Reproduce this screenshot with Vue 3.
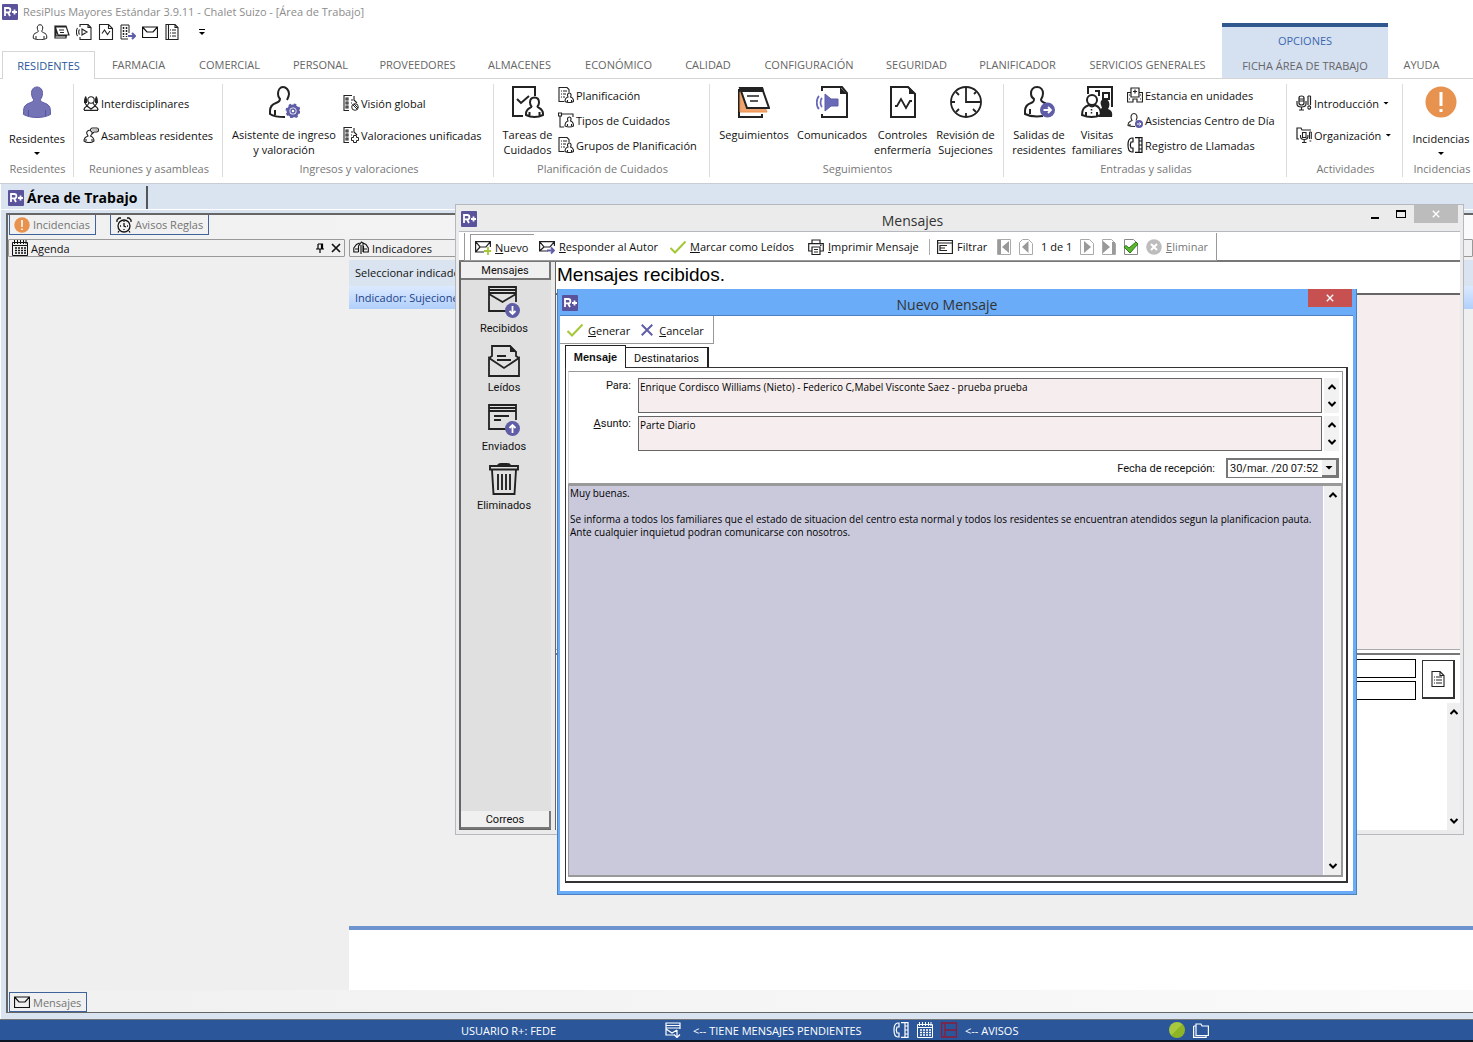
<script setup>
import { ref } from 'vue'

const tabs = ['RESIDENTES', 'FARMACIA', 'COMERCIAL', 'PERSONAL', 'PROVEEDORES', 'ALMACENES', 'ECONÓMICO', 'CALIDAD', 'CONFIGURACIÓN', 'SEGURIDAD', 'PLANIFICADOR', 'SERVICIOS GENERALES', 'FICHA ÁREA DE TRABAJO', 'AYUDA']
const activeTab = ref('RESIDENTES')
const contextTab = 'FICHA ÁREA DE TRABAJO'

const quick = [
  ['person', 'Residentes'], ['notes', 'Seguimientos'], ['speaker', 'Comunicados'], ['chart', 'Controles'],
  ['building', 'Salidas'], ['mail', 'Mensajes'], ['list', 'Informes'],
]

const groups = [
  { label: 'Residentes', cls: 'g-res', big: [{ icon: 'person-fill', lines: ['Residentes'], menu: true }] },
  { label: 'Reuniones y asambleas', cls: 'g-reu', small: [['meeting', 'Interdisciplinares'], ['talk', 'Asambleas residentes']] },
  { label: 'Ingresos y valoraciones', cls: 'g-ing', big: [{ icon: 'person-gear', lines: ['Asistente de ingreso', 'y valoración'] }], small: [['global', 'Visión global'], ['unified', 'Valoraciones unificadas']] },
  { label: 'Planificación de Cuidados', cls: 'g-pla', big: [{ icon: 'tasks', lines: ['Tareas de', 'Cuidados'] }], small: [['plan', 'Planificación'], ['types', 'Tipos de Cuidados'], ['plan', 'Grupos de Planificación']] },
  { label: 'Seguimientos', cls: 'g-seg', big: [{ icon: 'notes-big', lines: ['Seguimientos'] }, { icon: 'speaker-big', lines: ['Comunicados'] }, { icon: 'chart-big', lines: ['Controles', 'enfermería'] }, { icon: 'clock', lines: ['Revisión de', 'Sujeciones'] }] },
  { label: 'Entradas y salidas', cls: 'g-ent', big: [{ icon: 'person-out', lines: ['Salidas de', 'residentes'] }, { icon: 'visits', lines: ['Visitas', 'familiares'] }], small: [['hospital', 'Estancia en unidades'], ['assist', 'Asistencias Centro de Día'], ['phone', 'Registro de Llamadas']] },
  { label: 'Actividades', cls: 'g-act', small: [['mic', 'Introducción', true], ['micfolder', 'Organización', true]] },
  { label: 'Incidencias', cls: 'g-inc', big: [{ icon: 'alert', lines: ['Incidencias'], menu: true }] },
]

const folders = [['inbox', 'Recibidos'], ['opened', 'Leídos'], ['sent', 'Enviados'], ['trash', 'Eliminados']]

const para = ref('Enrique Cordisco Williams (Nieto) - Federico C,Mabel Visconte Saez - prueba prueba')
const asunto = ref('Parte Diario')
const cuerpo = ref('Muy buenas.\n\nSe informa a todos los familiares que el estado de situacion del centro esta normal y todos los residentes se encuentran atendidos segun la planificacion pauta.\nAnte cualquier inquietud podran comunicarse con nosotros.')
</script>

<template>
  <div class="app">
    <svg class="sprite" aria-hidden="true">
      <symbol id="logo" viewBox="0 0 16 16">
        <rect width="16" height="16" rx="1" fill="#5b529c" />
        <path d="M3 12V4h3.200a2 2 0 0 1 0 4.400H3M6 8.400 8 12M10 8h5M12.500 5.500v5" fill="none" stroke="#fff" stroke-width="1.800" />
      </symbol>
      <symbol id="person" viewBox="0 0 32 32">
        <path d="M16 1.500c-4 0-5.500 3-5.500 6.500 0 2.500 1 4.500 2 6 0 2-1.500 2.500-4 3.500-4 1.500-6 3.500-6 8.500v2.500c4 2 8 3 13.500 3s9.500-1 13.500-3V26c0-5-2-7-6-8.500-2.500-1-4-1.500-4-3.500 1-1.500 2-3.500 2-6 0-3.500-1.500-6.500-5.500-6.500zM8 24v6M24 24v6" fill="none" stroke="#222" stroke-width="2" />
      </symbol>
      <symbol id="person-fill" viewBox="0 0 32 32">
        <path d="M16 1c-4 0-5.500 3-5.500 6.500 0 2.500 1 4.500 2 6 0 2-1.500 2.500-4 3.500-4 1.500-6 3.500-6 8.500v3c4 2 8 3 13.500 3s9.500-1 13.500-3v-3c0-5-2-7-6-8.500-2.500-1-4-1.500-4-3.500 1-1.500 2-3.500 2-6C21.500 4 20 1 16 1z" fill="#7473b5" stroke="#5f5da6" />
        <path d="M7.500 24v6M24.500 24v6" stroke="#5654a0" />
      </symbol>
      <symbol id="person-gear" viewBox="0 0 32 32">
        <path d="M17 31C9 31 5 30 2 28v-3c0-5 3-7 6-8s4-2 4-4c-1-1-2-3-2-5 0-4 2-7 5-7s6 3 6 7c0 2-1 4-2 6M7 24v5" fill="none" stroke="#222" stroke-width="2" />
        <circle cx="25" cy="25" r="5" fill="#fff" stroke="#5f5da6" stroke-width="3" />
        <circle cx="25" cy="25" r="6.500" fill="none" stroke="#5f5da6" stroke-width="2" stroke-dasharray="2.500 2.600" />
        <circle cx="25" cy="25" r="2" fill="none" stroke="#5f5da6" stroke-width="1.500" />
      </symbol>
      <symbol id="person-out" viewBox="0 0 32 32">
        <path d="M20 30c-8 1-14 0-18-2v-3c0-5 3-7 6-8s3-2 3-4C9 12 8 10 8 7.500 8 4 10 1 14 1s6 3 6 6.500c0 2.500-1 4.500-2 6 0 2 2 3 5 4M7 23v5" fill="none" stroke="#222" stroke-width="2" />
        <circle cx="24.500" cy="24" r="7.500" fill="#5f5da6" />
        <path d="M20.500 24h7M25 21l3 3-3 3" fill="none" stroke="#fff" stroke-width="1.800" />
      </symbol>
      <symbol id="tasks" viewBox="0 0 32 32">
        <path d="M11 30H1V1h22v9" fill="none" stroke="#222" stroke-width="2" />
        <path d="m5 13 4 4 8-7" fill="none" stroke="#222" stroke-width="2" />
        <path d="M22.500 11.500c-3 0-4.500 2-4.500 5 0 2 .5 3 1.500 4 0 1.500-5.500 2-5.500 7v1.500c5 2.500 12 2.500 17 0v-1.500c0-5-5.500-5.500-5.500-7 1-1 1.500-2 1.500-4 0-3-1.500-5-4.500-5zM17.500 26v4M27.500 26v4" fill="#fff" stroke="#222" stroke-width="2" />
      </symbol>
      <symbol id="notes-big" viewBox="0 0 32 32">
        <path d="M1 3v28h23v-3" fill="none" stroke="#222" stroke-width="2" />
        <path d="M2 6v20h27l-2-5z" fill="#f0a36c" stroke="#e8924f" />
        <path d="M2 2h22l7 20H9z" fill="#fff" stroke="#222" stroke-width="2" />
        <path d="M1 1h24l1 5H4z" fill="#222" />
        <path d="M9 10h12M12 15h8" stroke="#222" stroke-width="1.500" />
      </symbol>
      <symbol id="speaker-big" viewBox="0 0 32 32">
        <path d="M6 5V1h20l5 6v24H6v-3" fill="none" stroke="#222" stroke-width="2" />
        <path d="M24 1v7h7z" fill="#222" />
        <path d="M9 8v17l6-5h7v-7h-7z" fill="#6b6ab8" stroke="#5f5da6" />
        <path d="M6 12c-2 2-2 7 0 9M3 10c-3 3-3 10 0 13" fill="none" stroke="#6b6ab8" stroke-width="1.800" />
      </symbol>
      <symbol id="chart-big" viewBox="0 0 32 32">
        <path d="M4 1h17l7 7v23H4z" fill="none" stroke="#222" stroke-width="2" />
        <path d="M22 1v7h7z" fill="#222" />
        <path d="M8 20h2l4-7 5 9 4-7h2" fill="none" stroke="#222" stroke-width="1.800" />
      </symbol>
      <symbol id="clock" viewBox="0 0 32 32">
        <circle cx="16" cy="16" r="15" fill="none" stroke="#222" stroke-width="1.800" />
        <path d="M16 1v15h15M16 27v4M1 16h4M6 6l3 3M6 26l3-3M26 26l-3-3M26 6l-2 2" fill="none" stroke="#222" stroke-width="1.800" />
      </symbol>
      <symbol id="visits" viewBox="0 0 32 32">
        <path d="M7 8V1h24v20M14 5h4v5M22 7h6v6h-6z" fill="none" stroke="#222" stroke-width="2" />
        <path d="M24 13c-4 0-5 3-4 6l1 3-3 2v7h13c1-5-1-7-4-8 3-4 1-10-3-10z" fill="#222" />
        <circle cx="11" cy="14" r="5" fill="#fff" stroke="#222" stroke-width="2" />
        <path d="M8 19c-5 2-7 4-7 10 6 2.500 13 2.500 19 0 0-6-2-8-6-10-2 2-4 2-6 0zM5 26v4M16 26v4" fill="#fff" stroke="#222" stroke-width="2" />
        <path d="M10.500 23v5" stroke="#222" stroke-width="1.500" stroke-dasharray="1.500" />
      </symbol>
      <symbol id="alert" viewBox="0 0 32 32">
        <circle cx="16" cy="16" r="15.500" fill="#e8924f" />
        <path d="M16 6v14M16 23v3" stroke="#fff" stroke-width="3" />
      </symbol>
      <symbol id="notes" viewBox="0 0 16 16">
        <path d="M1 2h11l3 9H4zM1 2v12h11v-2M2 5v7h11M1 3h11M5 6h5M6 8.500h4" fill="none" stroke="#222" stroke-width="1.200" />
      </symbol>
      <symbol id="speaker" viewBox="0 0 16 16">
        <path d="M4 3V.5h8l3 3v12H4V13M12 .5v3h3M6 5v6l5-3zM3.500 5.500c-1 1-1 4 0 5M1.500 4c-1.500 2-1.500 6 0 8" fill="none" stroke="#222" stroke-width="1.100" />
      </symbol>
      <symbol id="chart" viewBox="0 0 16 16">
        <path d="M1.500.5h9l4 4v11h-13zM10.500.5v4h4M4 9.500 6.500 6l3 4.500L12 7" fill="none" stroke="#222" stroke-width="1.100" />
      </symbol>
      <symbol id="building" viewBox="0 0 16 16">
        <path d="M8 15H1V1h8v8" fill="none" stroke="#222" />
        <path d="M3.500 3v10M6.500 3v10" stroke="#222" stroke-width="1.500" stroke-dasharray="2 1" />
        <path d="M8 12h6M12 9l3 3-3 3" fill="none" stroke="#5f5da6" stroke-width="2" />
      </symbol>
      <symbol id="mail" viewBox="0 0 16 16">
        <path d="M.5 3h15v10.500H.5zM.5 3 5 8h6l4.500-5" fill="none" stroke="currentColor" stroke-width="1.200" />
      </symbol>
      <symbol id="list" viewBox="0 0 16 16">
        <path d="M2 .5h9l3 3v12H2zM4.500.5v15M11 .5v3h3M6 6h1M8 6h4M6 9h1M8 9h4M6 12h1M8 12h4" fill="none" stroke="#222" stroke-width="1.100" />
      </symbol>
      <symbol id="doc" viewBox="0 0 16 16">
        <path d="M2 .5h8l4 4v11H2zM10 .5v4h4M4 6h1M6 6h6M4 9h1M6 9h6M4 12h1M6 12h6" fill="none" stroke="#222" stroke-width="1.100" />
      </symbol>
      <symbol id="meeting" viewBox="0 0 16 16">
        <path d="M3 1C1 2 1 6 1 8h3V4zM13 1c2 1 2 5 2 7h-3V4z" fill="#222" />
        <circle cx="8" cy="5" r="3.200" fill="#fff" stroke="#222" stroke-width="1.100" />
        <path d="M1 15c0-2 1-3 3-4L2 8M15 15c0-2-1-3-3-4l2-3M6 8l-2 3 4 3 4-3-2-3M1 15.300h14" fill="none" stroke="#222" stroke-width="1.200" />
      </symbol>
      <symbol id="talk" viewBox="0 0 16 16">
        <path d="M8 3.500C5 2.500 3 5 4 7l1 2c-3 1-4 2-4 5 3 2 7 2 10 0 0-3-1-4-3.500-5L9 7M3 12v2M9 12v2M9 1h5q1.500 0 1.500 2T14 5h-3L9 7V5q-1.500-.5-1.500-2T9 1zM9.500 3h1M11.500 3h1M13.300 3h1" fill="none" stroke="#222" stroke-width="1.100" />
      </symbol>
      <symbol id="global" viewBox="0 0 16 16">
        <path d="M6 15.500H1V.5h8M11 1v4l3 3M3 3h2v2H3zM3 7h2v2H3zM3 11h2v2H3z" fill="none" stroke="#222" stroke-width="1.100" />
        <path d="M8 5h2M8 8h1" stroke="#222" />
        <circle cx="12" cy="12" r="3.300" fill="none" stroke="#222" /><path d="m10 10 4 4M11 9l4 4" stroke="#222" />
      </symbol>
      <symbol id="unified" viewBox="0 0 16 16">
        <path d="M6 15.500H1V.5h8M11 1v4l3 3M3 3h2v2H3zM3 7h2v2H3zM3 11h2v2H3z" fill="none" stroke="#222" stroke-width="1.100" />
        <path d="M8 5h2M8 8h1" stroke="#222" />
        <path d="M10.500 8.500h3v2h2v3h-2v2h-3v-2h-2v-3h2z" fill="#fff" stroke="#222" />
      </symbol>
      <symbol id="plan" viewBox="0 0 16 16">
        <path d="M6 14.500H1V.5h8l2 2v3M3 4h1M5 4h4M3 7h1M5 7h3M3 10h1M5 10h2" fill="none" stroke="#222" stroke-width="1.100" />
        <path d="M11.500 6c-2 0-2.500 2-1.500 4-2 .5-3 2-3 4.500 3 1.300 6 1.300 8.500 0 0-2.500-1-4-3-4.500 1-2 .5-4-1-4zM9.500 13v2M13.500 13v2" fill="#fff" stroke="#222" stroke-width="1.100" />
      </symbol>
      <symbol id="types" viewBox="0 0 16 16">
        <path d="M.5 1h3v3h-3zM3.500 2H15v3M2 4v11h4" fill="none" stroke="#222" stroke-width="1.100" />
        <path d="M11.500 5c-2 0-2.500 2-1.500 4-2 .5-3 2-3 5 3 1.300 6 1.300 8.500 0 0-3-1-4.500-3-5 1-2 .5-4-1-4zM9.500 12v2M13.500 12v2" fill="#fff" stroke="#222" stroke-width="1.100" />
      </symbol>
      <symbol id="hospital" viewBox="0 0 16 16">
        <path d="M4 5V1h8v4M.5 15V5.500H4V10h8V5.500h3.500V15H10v-3H6v3zM8 2.500v4M6 4.500h4M2 8h1M13 8h1M2 12h1M13 12h1" fill="none" stroke="#222" stroke-width="1.200" />
      </symbol>
      <symbol id="assist" viewBox="0 0 16 16">
        <path d="M8 14.500c-3 0-5 0-7-1 0-3 1-4 4-5-2-3-1-7 2-7s4 4 2 7M3 12v2" fill="none" stroke="#222" stroke-width="1.100" />
        <circle cx="12" cy="12" r="4" fill="#5f5da6" /><path d="M10 12h4M12.500 10.500 14 12l-1.500 1.500" fill="none" stroke="#fff" />
      </symbol>
      <symbol id="phone" viewBox="0 0 16 16">
        <path d="M5 1C2 1 1 4 1 8s1 7 4 7h1v-4H4c-1-2-1-4 0-6h2V1zM8 .7h7v14.600H8M12 .5v15M12 4h3M12 8h3M12 12h3" fill="none" stroke="currentColor" stroke-width="1.200" />
      </symbol>
      <symbol id="mic" viewBox="0 0 16 16">
        <path d="M3 3q0-2 2.500-2T8 3v5q0 2-2.500 2T3 8zM3 4h5M3 6h5M1 6v3q0 3 4.500 3T10 9V6M5.500 12v3M3 15h5M12 1v9M14.500 1v9M12 1h2.500M12 12.500a1.300 1.300 0 1 0 2.500 0 1.300 1.300 0 1 0-2.500 0" fill="none" stroke="#222" stroke-width="1.200" />
      </symbol>
      <symbol id="micfolder" viewBox="0 0 16 16">
        <path d="M3 12H1V1h4l1 2h9" fill="none" stroke="#222" stroke-width="1.200" />
        <path d="M6.500 5.500h3.500v5H6.500zM4.500 8v1.500q0 3 3.700 3t3.700-3V8M8.200 12.500v3M6 15.500h4.500M13.500 5v7M15.300 5v7M13.500 5h1.800M13.500 14h1.800" fill="none" stroke="#222" stroke-width="1.100" />
      </symbol>
      <symbol id="alarm" viewBox="0 0 16 16">
        <circle cx="8" cy="9" r="6" fill="none" stroke="#111" stroke-width="1.300" />
        <path d="M1 5V3l2-2h2M15 5V3l-2-2h-2M8 6v3l2 1M3 14l-1 1.500M13 14l1 1.500M8 4v1M4 9h1M11 9h1M8 12v1" fill="none" stroke="#111" stroke-width="1.300" />
      </symbol>
      <symbol id="calendar" viewBox="0 0 16 16">
        <path d="M.5 2.500h15v13H.5zM.5 5.500h15M2.500 0v4M5.500 0v4M8.500 0v4M11.500 0v4M14 0v4" fill="none" stroke="currentColor" />
        <path d="M3 8h11M3 10.500h11M3 13h11" stroke="currentColor" stroke-width="1.500" stroke-dasharray="2 1" />
      </symbol>
      <symbol id="gauge" viewBox="0 0 16 16">
        <path d="M5.500 12H.8V8L3.500 4.500 6.500 3M10 3l3 1.500L15.300 8v4H10.500V6M5.500 12V6l3-4 1.500 1v9M8 5v9M2 9h3M11 9h3" fill="none" stroke="#111" stroke-width="1.100" />
      </symbol>
      <symbol id="mail-new" viewBox="0 0 16 16">
        <path d="M9 13H.6V2.600h14.800V8M.6 2.600 5 8h6l4.400-5.400M.6 13 5 8" fill="none" stroke="#222" stroke-width="1.200" />
        <path d="M13 8v8M9 12h7.500" stroke="#a5c739" stroke-width="1.800" />
      </symbol>
      <symbol id="mail-reply" viewBox="0 0 16 16">
        <path d="M9 12H.6V2.600h14.800V7M.6 2.600 5 8h6l4.400-5.400M.6 12 5 8" fill="none" stroke="#222" stroke-width="1.200" />
        <path d="M8 11.500h7M12 8.500l3 3-3 3" fill="none" stroke="#5f5da6" stroke-width="1.800" />
      </symbol>
      <symbol id="check" viewBox="0 0 16 16">
        <path d="m.5 9 4.500 4.500L15.500 2.500" fill="none" stroke="#a5c739" stroke-width="2" />
      </symbol>
      <symbol id="cross" viewBox="0 0 16 16">
        <path d="m2 2 12 12M14 2 2 14" fill="none" stroke="#5f5da6" stroke-width="2.300" />
      </symbol>
      <symbol id="printer" viewBox="0 0 16 16">
        <path d="M4 4V1h8v3M4 12H.7V4.600h14.600V12H12M4 8h8v7.500H4zM6 10.500h4M6 13h4M12 6.300h1.500" fill="none" stroke="#222" stroke-width="1.200" />
      </symbol>
      <symbol id="filter" viewBox="0 0 16 16">
        <path d="M.6 1.500h14.800v13H.6zM.6 4h14.800M3 6.500h7M3 9h5M3 11.500h7M3 6v6" fill="none" stroke="#222" stroke-width="1.200" />
      </symbol>
      <symbol id="first" viewBox="0 0 16 16"><path d="M1.500.5h13v15h-13z" fill="#fff" stroke="#aaa" /><path d="M2 1h3v14H2zM13 2v12L6 8z" fill="#999" /></symbol>
      <symbol id="prev" viewBox="0 0 16 16"><path d="M4.500.5h6l4 4v11h-13v-12z" fill="#fff" stroke="#aaa" /><path d="M10.500 2v12L4 8z" fill="#999" /></symbol>
      <symbol id="next" viewBox="0 0 16 16"><path d="M1.500.5h9l4 4v11h-13z" fill="#fff" stroke="#aaa" /><path d="M5 2v12l7-6z" fill="#999" /></symbol>
      <symbol id="last" viewBox="0 0 16 16"><path d="M1.500.5h9l4 4v11h-13z" fill="#fff" stroke="#aaa" /><path d="M2 2v12l7-6zM11 3h3v12h-3z" fill="#999" /></symbol>
      <symbol id="accept" viewBox="0 0 16 16"><path d="M1.500.5h9l4 4v11h-13z" fill="#fff" stroke="#888" /><path d="m1 8 2-1.500L6 9l7-6 2 2-8 9z" fill="#5cb531" stroke="#2d7c15" /></symbol>
      <symbol id="delete" viewBox="0 0 16 16"><circle cx="8" cy="8" r="7.800" fill="#bdbdbd" /><path d="m5 5 6 6M11 5l-6 6" stroke="#fff" stroke-width="2" /></symbol>
      <symbol id="inbox" viewBox="0 0 32 32">
        <path d="M18 25H1V1h27v15M1 4h27M1 7h27M1 8l13.500 8L28 8" fill="none" stroke="#222" stroke-width="1.800" />
        <circle cx="24.500" cy="24.500" r="7.500" fill="#5f5da6" /><path d="M24.500 20v8M21.500 25l3 3 3-3" fill="none" stroke="#fff" stroke-width="1.800" />
      </symbol>
      <symbol id="sent" viewBox="0 0 32 32">
        <path d="M18 25H1V1h27v15M1 4h27M1 7h27M6 12h15M6 16h7" fill="none" stroke="#222" stroke-width="1.800" />
        <circle cx="24.500" cy="24.500" r="7.500" fill="#5f5da6" /><path d="M24.500 29v-8M21.500 24l3-3 3 3" fill="none" stroke="#fff" stroke-width="1.800" />
      </symbol>
      <symbol id="opened" viewBox="0 0 32 32">
        <path d="M1 13v18h30V13l-15 10zM1 13l3-2V1h18l6 6v4l3 2M9 11h9M9 15h14" fill="none" stroke="#222" stroke-width="1.800" />
        <path d="M22 0v7h7z" fill="#222" />
      </symbol>
      <symbol id="trash" viewBox="0 0 32 32">
        <path d="M2 3h28v3.500H2zM10 3q0-2 3-2h6q3 0 3 2M4 7l1.500 24h21L28 7M10 11v16M14 11v16M18 11v16M22 11v16" fill="none" stroke="#222" stroke-width="1.900" />
      </symbol>
      <symbol id="up" viewBox="0 0 10 8"><path d="M1.500 6 5 2.500 8.500 6" fill="none" stroke="#000" stroke-width="2" /></symbol>
      <symbol id="down" viewBox="0 0 10 8"><path d="M1.500 2 5 5.500 8.500 2" fill="none" stroke="#000" stroke-width="2" /></symbol>
      <symbol id="x" viewBox="0 0 10 10"><path d="m1 1 8 8M9 1 1 9" fill="none" stroke="currentColor" stroke-width="1.700" /></symbol>
      <symbol id="pin" viewBox="0 0 10 10"><path d="M3 1h4.500v5M3 1v5M1 6h8M5 6v4M6.500 1v5" fill="none" stroke="#000" stroke-width="1.200" /></symbol>
      <symbol id="pending" viewBox="0 0 16 16"><path d="M9 13H1V1h14v6M1 3.500h14M1 6h14M1 7l6 4 5-3M12 8v7M9 12.500l3 3 3-3" fill="none" stroke="#fff" stroke-width="1.200" /></symbol>
      <symbol id="board" viewBox="0 0 16 16"><path d="M.6 1h14.800v14H.6zM4 1v14M4 8h11.500" fill="none" stroke="#8c1c36" stroke-width="1.300" /></symbol>
      <symbol id="folder" viewBox="0 0 16 16"><path d="M3 4V2h5l1 2h6.400v9.500H3zM.6 13V4M.6 4v11.400h12.500v-2M.6 4H3" fill="none" stroke="#fff" stroke-width="1.200" /></symbol>
    </svg>

    <header>
      <div class="titlebar">
        <svg class="i16"><use href="#logo" /></svg>
        <span>ResiPlus Mayores Estándar 3.9.11 - Chalet Suizo - [Área de Trabajo]</span>
      </div>
      <div class="quickbar">
        <button v-for="[icon, name] in quick" :key="icon" :aria-label="name"><svg class="i16"><use :href="'#' + icon" /></svg></button>
        <button class="more" aria-label="Personalizar"><i class="dash"></i><i class="caret"></i></button>
      </div>
      <nav class="tabs">
        <button v-for="t in tabs" :key="t" :class="{ active: t === activeTab, context: t === contextTab }" @click="activeTab = t">
          <span v-if="t === contextTab" class="over">OPCIONES</span><span>{{ t }}</span>
        </button>
      </nav>
    </header>

    <section class="ribbon">
      <div v-for="g in groups" :key="g.label" class="group" :class="g.cls">
        <div class="tools">
          <button v-for="b in g.big" :key="b.icon" class="big" :class="{ menu: b.menu }">
            <svg class="i32"><use :href="'#' + b.icon" /></svg>
            <span class="cap"><span v-for="l in b.lines" :key="l">{{ l }}</span></span>
            <i v-if="b.menu" class="caret"></i>
          </button>
          <div v-if="g.small" class="stack" :class="{ three: g.small.length === 3 }">
            <button v-for="[icon, text, menu] in g.small" :key="text" class="small">
              <svg class="i16"><use :href="'#' + icon" /></svg><span>{{ text }}</span><i v-if="menu" class="caret"></i>
            </button>
          </div>
        </div>
        <div class="label">{{ g.label }}</div>
      </div>
    </section>

    <main class="workspace">
      <div class="doctabs"><h1><svg class="i16"><use href="#logo" /></svg>Área de Trabajo</h1></div>
      <div class="panel">
        <div class="dock top">
          <button><svg class="i16"><use href="#alert" /></svg>Incidencias</button>
          <button><svg class="i16"><use href="#alarm" /></svg>Avisos Reglas</button>
        </div>
        <div class="columns">
          <section class="agenda">
            <h2 class="caption"><svg class="i16"><use href="#calendar" /></svg><span class="grow">Agenda</span>
              <button aria-label="Fijar"><svg class="i10"><use href="#pin" /></svg></button>
              <button aria-label="Cerrar"><svg class="i10"><use href="#x" /></svg></button>
            </h2>
          </section>
          <section class="indicators">
            <h2 class="caption"><svg class="i16"><use href="#gauge" /></svg><span>Indicadores</span></h2>
            <div class="row pick">Seleccionar indicador</div>
            <div class="row chosen">Indicador: Sujeciones</div>
            <div class="fill"></div>
            <div class="result"></div>
          </section>
        </div>
        <div class="dock bottom"><button><svg class="i16"><use href="#mail" /></svg>Mensajes</button></div>
      </div>

      <section class="window messages">
        <div class="wtitle">
          <svg class="i16"><use href="#logo" /></svg><h2>Mensajes</h2>
          <div class="wbuttons">
            <button class="min" aria-label="Minimizar"><i></i></button>
            <button class="max" aria-label="Maximizar"><i></i></button>
            <button class="close" aria-label="Cerrar"><svg class="i8"><use href="#x" /></svg></button>
          </div>
        </div>
        <div class="toolbar">
          <div class="band">
            <button class="t-new"><svg class="i16"><use href="#mail-new" /></svg><span><u>N</u>uevo</span></button>
            <button class="t-reply"><svg class="i16"><use href="#mail-reply" /></svg><span><u>R</u>esponder al Autor</span></button>
            <button class="t-mark"><svg class="i16"><use href="#check" /></svg><span><u>M</u>arcar como Leídos</span></button>
            <button class="t-print"><svg class="i16"><use href="#printer" /></svg><span><u>I</u>mprimir Mensaje</span></button>
            <button class="t-filter"><svg class="i16"><use href="#filter" /></svg><span>Filtrar</span></button>
            <div class="pager">
              <button aria-label="Primero"><svg class="i16"><use href="#first" /></svg></button>
              <button aria-label="Anterior"><svg class="i16"><use href="#prev" /></svg></button>
              <span>1 de 1</span>
              <button aria-label="Siguiente"><svg class="i16"><use href="#next" /></svg></button>
              <button aria-label="Último"><svg class="i16"><use href="#last" /></svg></button>
              <button aria-label="Aceptar"><svg class="i16"><use href="#accept" /></svg></button>
            </div>
            <button class="off" disabled><svg class="i16"><use href="#delete" /></svg><span><u>E</u>liminar</span></button>
          </div>
        </div>
        <div class="wbody">
          <aside>
            <button class="bar">Mensajes</button>
            <div class="folders">
              <button v-for="[icon, name] in folders" :key="name"><svg class="i32"><use :href="'#' + icon" /></svg>{{ name }}</button>
            </div>
            <button class="bar">Correos</button>
          </aside>
          <div class="mail">
            <h3>Mensajes recibidos.</h3>
            <div class="grid"></div>
            <div class="meta">
              <div class="fields"><input aria-label="Remitente"><input aria-label="Asunto recibido"></div>
              <button class="open" aria-label="Ver informe"><svg class="i16"><use href="#doc" /></svg></button>
            </div>
            <div class="preview">
              <div class="scroll"><button aria-label="Subir"><svg class="arr"><use href="#up" /></svg></button><button aria-label="Bajar"><svg class="arr"><use href="#down" /></svg></button></div>
            </div>
          </div>
        </div>
      </section>

      <section class="window dialog" role="dialog" aria-label="Nuevo Mensaje">
        <div class="wtitle">
          <svg class="i16"><use href="#logo" /></svg><h2>Nuevo Mensaje</h2>
          <div class="wbuttons"><button class="close" aria-label="Cerrar"><svg class="i8"><use href="#x" /></svg></button></div>
        </div>
        <form class="dbody" @submit.prevent>
          <div class="dtools">
            <button><svg class="i16"><use href="#check" /></svg><span><u>G</u>enerar</span></button>
            <button type="button"><svg class="i14"><use href="#cross" /></svg><span><u>C</u>ancelar</span></button>
          </div>
          <div class="dtabs" role="tablist">
            <button type="button" role="tab" aria-selected="true" class="on">Mensaje</button>
            <button type="button" role="tab" aria-selected="false">Destinatarios</button>
          </div>
          <div class="sheet">
            <div class="fieldset">
              <div class="line">
                <label for="para">Para:</label>
                <textarea id="para" v-model="para"></textarea>
                <div class="scroll"><button type="button" aria-label="Subir"><svg class="arr"><use href="#up" /></svg></button><button type="button" aria-label="Bajar"><svg class="arr"><use href="#down" /></svg></button></div>
              </div>
              <div class="line">
                <label for="asunto"><u>A</u>sunto:</label>
                <textarea id="asunto" v-model="asunto"></textarea>
                <div class="scroll"><button type="button" aria-label="Subir"><svg class="arr"><use href="#up" /></svg></button><button type="button" aria-label="Bajar"><svg class="arr"><use href="#down" /></svg></button></div>
              </div>
              <div class="date">
                <label for="fecha">Fecha de recepción:</label>
                <div class="combo">
                  <select id="fecha"><option>30/mar. /20 07:52</option></select>
                  <span class="drop"><i class="caret"></i></span>
                </div>
              </div>
            </div>
            <div class="editor">
              <textarea v-model="cuerpo" aria-label="Texto del mensaje"></textarea>
              <div class="scroll"><button type="button" aria-label="Subir"><svg class="arr"><use href="#up" /></svg></button><button type="button" aria-label="Bajar"><svg class="arr"><use href="#down" /></svg></button></div>
            </div>
          </div>
        </form>
      </section>
    </main>

    <footer>
      <span class="user">USUARIO R+: FEDE</span>
      <span class="pend"><svg class="i16"><use href="#pending" /></svg>&lt;-- TIENE MENSAJES PENDIENTES</span>
      <span class="warn"><svg class="i16"><use href="#phone" /></svg><svg class="i16"><use href="#calendar" /></svg><svg class="i16"><use href="#board" /></svg>&lt;-- AVISOS</span>
      <span class="state"><i class="dot"></i><svg class="i16"><use href="#folder" /></svg></span>
    </footer>
  </div>
</template>

<style>
body { margin: 0; }
</style>

<style scoped>
* { box-sizing: border-box; }
.app { min-height: 100vh; display: flex; flex-direction: column; background: #fff; color: #111; font: 11px/15px "Open Sans", "Noto Sans", sans-serif; overflow: hidden; }
button { font: inherit; color: inherit; background: none; border: 0; padding: 0; margin: 0; white-space: nowrap; }
h1, h2, h3 { margin: 0; font: inherit; }
.sprite { position: absolute; width: 0; height: 0; }
svg { display: block; flex: none; }
.i8 { width: 8px; height: 8px; }
.i10 { width: 10px; height: 10px; }
.i14 { width: 14px; height: 14px; }
.i16 { width: 16px; height: 16px; }
.i32 { width: 32px; height: 32px; }
.arr { width: 10px; height: 8px; }
.caret { display: block; flex: none; width: 6px; height: 3px; background: #000; clip-path: polygon(0 0, 100% 0, 50% 100%); }

.titlebar { display: flex; align-items: center; gap: 5px; height: 23px; padding-left: 2px; color: #8c8c8c; }
.quickbar { display: flex; align-items: center; gap: 6px; height: 18px; padding-left: 32px; margin-bottom: 10px; }
.more { display: grid; gap: 2px; margin-left: 13px; }
.dash { width: 6px; height: 1px; background: #000; }
.tabs { display: grid; grid-template-columns: 93px 87px 95px 87px 107px 97px 101px 78px 124px 91px 111px 149px 166px 67px; align-items: end; height: 56px; margin-top: -28px; padding-left: 2px; border-bottom: 1px solid #d5d5d5; color: #666; }
.tabs button { height: 28px; padding-top: 1px; }
.tabs .active { height: 28px; margin-bottom: -1px; background: #fff; border: 1px solid #d5d5d5; border-bottom: 0; color: #2b579a; padding: 0; }
.tabs .context { display: flex; flex-direction: column; justify-content: space-between; align-items: center; height: 55px; padding: 6px 0 5px; background: #d5e0f1; border-top: 4px solid #31578f; }
.over { color: #3c68b0; }

.ribbon { display: flex; height: 105px; padding-top: 5px; border-bottom: 1px solid #c9ced6; }
.group { flex: none; display: flex; flex-direction: column; height: 93px; border-right: 1px solid #dcdcdc; }
.group:last-child { border: 0; }
.tools { display: flex; height: 80px; }
.label { padding-left: 2px; text-align: center; color: #777; line-height: 16px; }
.g-res { width: 74px; }
.g-reu { width: 149px; }
.g-ing { width: 271px; }
.g-pla { width: 216px; }
.g-seg { width: 294px; }
.g-ent { width: 283px; }
.g-act { width: 116px; }
.g-inc { width: 76px; }
.g-res .tools { padding-left: 1px; }
.g-reu .tools, .g-act .tools { padding-left: 9px; }
.g-ing .tools, .g-pla .tools { padding-left: 7px; }
.g-seg .tools { padding-left: 5px; }
.g-ent .tools { padding-left: 6px; }
.big { display: flex; flex-direction: column; align-items: center; width: 76px; padding-top: 2px; }
.big .cap { display: grid; margin-top: 9px; text-align: center; }
.big.menu .cap { margin: 13px 0 6px; }
.g-ing .big { width: 108px; margin-right: 5px; }
.g-pla .big { width: 53px; margin-right: 4px; }
.g-seg .big { width: 78px; }
.g-seg .big:nth-child(3), .g-seg .big:nth-child(4) { width: 63px; }
.g-ent .big { width: 58px; }
.g-ent .stack { margin-left: 1px; }
.stack { display: flex; flex-direction: column; gap: 16px; padding-top: 11px; }
.stack.three { gap: 9px; padding-top: 3px; }
.small { display: flex; align-items: center; gap: 2px; height: 16px; }
.small .caret { margin-left: 2px; }

.workspace { position: relative; flex: 1; display: flex; flex-direction: column; min-height: 720px; padding: 2px 0 6px 5px; background: #d9e4f0; border-left: 1px solid #fff; }
.doctabs { height: 24px; margin-left: -5px; border-bottom: 1px solid #fff; }
.doctabs h1 { display: flex; align-items: center; gap: 3px; width: 147px; height: 23px; padding-left: 7px; border-right: 2px solid #555; font-weight: 700; font-size: 14px; color: #000; }
.panel { flex: 1; display: flex; flex-direction: column; margin-top: 3px; background: #efefef; border: solid #666; border-width: 2px 0 1px 2px; }
.dock { display: flex; height: 24px; padding-left: 1px; background: linear-gradient(90deg, #f0f0f0, #fafafa); }
.dock button { display: flex; align-items: center; gap: 3px; height: 20px; padding: 0 5px 0 4px; border: 1px solid #41639b; color: #747474; }
.dock.top button { border-top: 0; }
.dock.top button + button { margin-left: 14px; padding-left: 5px; }
.dock.bottom { height: 22px; align-items: flex-end; }
.dock.bottom svg { color: #111; }
.columns { flex: 1; display: grid; grid-template-columns: 337px 1fr; gap: 4px; }
.caption { display: flex; align-items: center; gap: 3px; height: 18px; padding: 0 3px; border: 1px solid #999; border-radius: 1px; background: #f0f0f0; }
.caption button { margin-left: 3px; }
.grow { flex: 1; }
.indicators { display: flex; flex-direction: column; }
.row { height: 26px; line-height: 26px; padding-left: 6px; }
.pick { margin-top: 3px; background: #d9e4f0; }
.chosen { height: 23px; line-height: 23px; background: linear-gradient(#dceaff, #b0cffb); color: #1d4289; }
.fill { flex: 1; }
.result { height: 64px; background: #fff; border-top: 4px solid #6d94cf; }

.window { position: absolute; display: flex; flex-direction: column; }
.messages { left: 454px; right: 9px; top: 20px; height: 631px; padding: 0 3px 4px; background: #ebebeb; border: 1px solid #b5b8bd; }
.wtitle { display: flex; height: 26px; padding-left: 2px; }
.wtitle > svg { margin-top: 6px; }
.wtitle h2 { flex: 1; padding-left: 8px; text-align: center; font-size: 14px; line-height: 31px; color: #333; }
.messages .wtitle h2 { padding-right: 22px; }
.wbuttons { display: flex; justify-content: flex-end; align-items: flex-start; margin-right: 2px; }
.wbuttons button { display: grid; place-items: center; width: 26px; height: 18px; }
.wbuttons .close { width: 44px; background: #bcbcbc; color: #fff; }
.min i { width: 8px; height: 2px; margin-top: 8px; background: #000; }
.max i { width: 10px; height: 8px; border: solid #000; border-width: 2px 1px 1px; }
.toolbar { height: 31px; padding: 1px 0 1px 5px; background: #fff; border-top: 1px solid #b5b8bd; border-bottom: 2px solid #777; }
.band { display: flex; align-items: center; width: 753px; height: 28px; border: solid #999; border-width: 0 1px 1px; }
.band > button { display: flex; align-items: center; gap: 4px; flex: none; }
.band .t-new { width: 64px; height: 26px; margin: 0 5px; padding-left: 4px; border: solid #999; border-width: 1px 0 0 1px; }
.t-reply { width: 131px; }
.t-mark { width: 138px; }
.t-print { width: 121px; }
.band .t-filter { width: 67px; padding-left: 7px; border-left: 1px solid #aaa; }
.pager { display: flex; align-items: center; width: 150px; gap: 6px; }
.pager span { margin: 0 1px; }
.off { color: #777; }
.wbody { flex: 1; display: flex; min-height: 0; font-family: Roboto, "Liberation Sans", sans-serif; }
aside { display: flex; flex-direction: column; width: 92px; background: #e0e0e0; border: 1px solid #666; border-width: 0 0 1px 2px; }
.bar { height: 18px; background: #f0f0f0; border: solid #777; border-width: 0 2px 2px 0; }
.folders { flex: 1; padding-top: 6px; }
.folders button { display: flex; flex-direction: column; align-items: center; gap: 3px; width: 86px; height: 59px; }
.mail { flex: 1; display: flex; flex-direction: column; margin-left: 4px; border-left: 1px solid #666; background: #fff; }
.mail h3 { height: 27px; padding-left: 1px; font: 19px/26px "Liberation Sans", Arial, sans-serif; color: #000; }
.grid { flex: 1; margin-top: 4px; background: #f6edee; border-top: 2px solid #666; border-bottom: 1px solid #aaa; }
.meta { display: flex; gap: 6px; margin-top: 3px; padding: 4px 5px 3px 2px; border-top: 2px solid #777; }
.fields { flex: 1; display: grid; gap: 3px; }
.fields input { width: 100%; height: 19px; border: 1px solid #000; background: #fff; }
.open { display: grid; place-items: center; width: 33px; height: 39px; margin-top: 1px; border: 1px solid #333; border-width: 1px 2px 2px 1px; }
.preview { display: flex; justify-content: flex-end; height: 127px; }
.scroll { display: flex; flex-direction: column; justify-content: space-between; align-items: center; width: 13px; padding: 5px 0; background: #efefef; }

.dialog { left: 556px; top: 105px; width: 800px; height: 606px; padding: 0 3px 3px 2px; background: #6aacf7; border: 1px solid #4c80c0; border-top: 0; }
.dialog .wbuttons { margin-right: 1px; }
.dialog .close { background: #c75050; }
.dbody { flex: 1; display: flex; flex-direction: column; background: #fff; border-top: 1px solid #4c80c0; font-family: Roboto, "Liberation Sans", sans-serif; }
.dtools { display: flex; gap: 10px; align-items: center; width: 154px; height: 28px; padding: 1px 0 0 7px; border: solid #999; border-width: 0 1px 1px 0; font-family: "Open Sans", "Noto Sans", sans-serif; }
.dtools button { display: flex; align-items: center; gap: 5px; }
.dtabs { display: flex; align-items: flex-end; height: 24px; padding-left: 5px; }
.dtabs button { width: 83px; height: 20px; margin-bottom: 1px; padding-top: 1px; border: 1px solid #222; border-width: 1px 2px 0 0; }
.dtabs .on { position: relative; z-index: 1; width: 61px; height: 23px; margin: 0; padding: 0; background: #fff; border-width: 1px 1px 0; font-family: "Liberation Sans", Arial, sans-serif; font-weight: 700; }
.sheet { flex: 1; display: flex; flex-direction: column; margin: -1px 5px 8px; padding: 3px 3px 4px 2px; border: solid #333; border-width: 1px 2px 2px 1px; position: relative; }
.fieldset { height: 113px; padding: 6px 3px 0 0; border: 1px solid #999; border-left-color: #ddd; }
.line { display: flex; gap: 2px; height: 35px; margin-bottom: 3px; }
.line label { width: 62px; margin-right: 5px; text-align: right; }
.line textarea { flex: 1; height: 35px; padding: 2px 1px; background: #f6edee; border: 1px solid #666; }
textarea { display: block; margin: 0; resize: none; border-radius: 0; overflow: hidden; font: 10px/13px "Open Sans", "Noto Sans", sans-serif; color: #000; outline: none; }
.line .scroll { width: 15px; background: #f2f2f2; }
.date { display: flex; justify-content: flex-end; align-items: center; gap: 11px; margin-top: 7px; }
.combo { position: relative; width: 113px; height: 20px; }
.combo select { appearance: none; width: 100%; height: 100%; padding: 0 2px; background: #fff; border: solid #777; border-width: 2px 1px 1px 2px; border-radius: 0; font: inherit; color: #111; }
.drop { position: absolute; right: 1px; top: 2px; display: grid; place-items: center; width: 16px; height: 17px; background: #efefef; border: solid #777; border-width: 0 2px 2px 0; pointer-events: none; }
.drop .caret { width: 8px; height: 4px; }
.editor { flex: 1; display: flex; gap: 1px; border: solid #999; border-width: 2px 2px 2px 1px; }
.editor textarea { flex: 1; padding: 1px; border: 0; background: #cac9dc; }
.editor .scroll { width: 17px; }

footer { display: grid; grid-template-columns: 204px 228px 276px 1fr; align-items: center; height: 23px; padding-left: 461px; background: #2b579a; border-top: 1px solid #777; border-bottom: 2px solid #0b1524; color: #fff; }
footer span { display: flex; align-items: center; gap: 12px; white-space: nowrap; }
footer .warn { gap: 8px; }
footer .state { gap: 8px; }
.dot { width: 16px; height: 16px; border-radius: 50%; background: linear-gradient(135deg, #a8c93e 50%, #8db526 50%); }
</style>
